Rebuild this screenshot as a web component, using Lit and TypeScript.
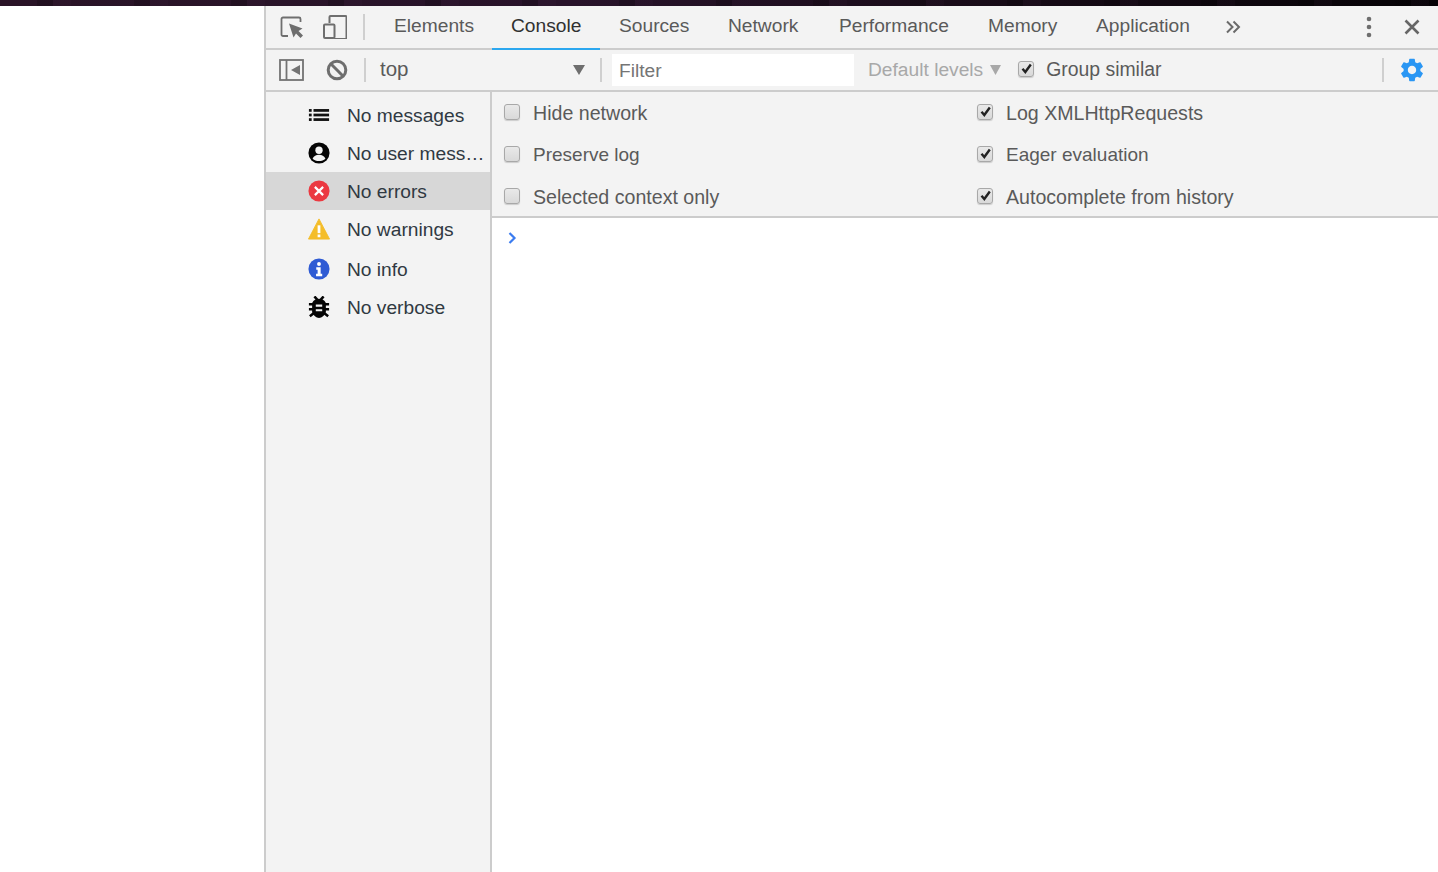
import { LitElement, html, css, svg } from "lit";
import { customElement } from "lit/decorators.js";

const ICONS: Record<string, unknown> = {
  list: svg`<rect x="1" y="5.500" width="3" height="3" fill="#111"/><rect x="1" y="10.500" width="3" height="3" fill="#111"/><rect x="1" y="15.500" width="3" height="3" fill="#111"/><rect x="6" y="5.500" width="17" height="3" fill="#111"/><rect x="6" y="10.500" width="17" height="3" fill="#111"/><rect x="6" y="15.500" width="17" height="3" fill="#111"/>`,
  user: svg`<circle cx="12" cy="12" r="11.500" fill="#050505"/><circle cx="12" cy="9" r="4" fill="#f3f3f3"/><path d="M5 18.200c1-3.200 4-4.400 7-4.400s6 1.200 7 4.400c-1.800 1.700-4.200 2.600-7 2.600s-5.200-.9-7-2.600z" fill="#f3f3f3"/>`,
  error: svg`<circle cx="12" cy="12" r="11.500" fill="#eb3941"/><path d="M7.500 7.500l9 9M16.500 7.500l-9 9" stroke="#fff" stroke-width="2.400"/>`,
  warn: svg`<path d="M12 1 23.500 23H.5z" fill="#f4bd2a" stroke="#f4bd2a" stroke-linejoin="round"/><rect x="10.500" y="8" width="3" height="8.500" fill="#fff"/><rect x="10.500" y="18" width="3" height="3" fill="#fff"/>`,
  info: svg`<circle cx="12" cy="12" r="11.500" fill="#2f5bd4"/><circle cx="12" cy="6.500" r="2.100" fill="#fff"/><path d="M9 10h4.800v7.300h1.700V20H8.800v-2.700h1.700v-4.600H9z" fill="#fff"/>`,
  bug: svg`<path d="M7 .5l3 3.500M17 .5l-3 3.500M1 9h5M18 9h5M1 14.500h5M18 14.500h5M2 22l4.500-3.500M22 22l-4.500-3.500" stroke="#050505" stroke-width="2.800" fill="none"/><path d="M4.500 7.500C6 4.500 9 3 12 3s6 1.500 7.500 4.500v10C18 21.500 15 24 12 24s-6-2.500-7.500-6.500z" fill="#050505"/><path d="M8.500 10.500h7M8.500 15.500h7" stroke="#f3f3f3" stroke-width="2.200"/>`,
};

const TABS = [
  ["Elements", 79],
  ["Console", 70],
  ["Sources", 71],
  ["Network", 73],
  ["Performance", 111],
  ["Memory", 70],
  ["Application", 97],
] as const;

const FILTERS = [
  ["list", "No messages", ""],
  ["user", "No user messages", ""],
  ["error", "No errors", "selected"],
  ["warn", "No warnings", ""],
  ["info", "No info", "gap"],
  ["bug", "No verbose", ""],
];

const OPTIONS = [
  ["Hide network", false],
  ["Log XMLHttpRequests", true],
  ["Preserve log", false],
  ["Eager evaluation", true],
  ["Selected context only", false],
  ["Autocomplete from history", true],
] as const;

@customElement("app-root")
export class AppRoot extends LitElement {
  static styles = css`
    :host {
      display: flex;
      flex-direction: column;
      height: 100vh;
      min-height: 872px;
      background: #fff;
      font-family: "Liberation Sans", Arial, sans-serif;
      font-size: 19.2px;
      color: #5a5a5a;
      overflow: hidden;
    }
    svg { display: block; flex: none; }
    .strip {
      height: 6px;
      flex: none;
      background:
        repeating-linear-gradient(90deg, rgba(0,0,0,0) 0 37px, rgba(0,0,0,.18) 37px 53px, rgba(70,40,70,.1) 53px 71px, rgba(0,0,0,0) 71px 97px),
        linear-gradient(90deg, #2a1427 0%, #28132a 40%, #170b17 70%, #060306 100%);
    }
    .page { flex: 1; display: flex; min-height: 0; }
    .blank { width: 264px; flex: none; background: #fff; }
    .devtools {
      flex: 1;
      min-width: 0;
      display: flex;
      flex-direction: column;
      border-left: 2px solid #cccccc;
      background: #fff;
    }
    .tabbar {
      height: 42px;
      flex: none;
      display: flex;
      align-items: stretch;
      background: #f3f3f3;
      border-bottom: 2px solid #cccccc;
    }
    .bar-icons { display: flex; align-items: center; flex: none; }
    .inspect { margin: 0 0 0 14px; }
    .device { margin-left: 19px; }
    .sep { width: 2px; background: #cfcfcf; flex: none; }
    .tabbar .sep { height: 26px; margin-left: 16px; }
    .tabs { display: flex; margin-left: 10px; }
    .tab {
      padding: 0 19px 5px;
      height: 44px;
      box-sizing: border-box;
      display: flex;
      align-items: center;
      white-space: nowrap;
      color: #5a5a5a;
    }
    .tab span { display: block; }
    .tab.active { color: #303030; border-bottom: 2px solid #2ba7ef; padding-bottom: 3px; }
    .more { margin-left: 13px; }
    .grow { flex: 1; }
    .dots { margin-right: 31px; }
    .close { margin-right: 17px; }
    .toolbar {
      height: 40px;
      flex: none;
      display: flex;
      align-items: center;
      background: #f3f3f3;
      border-bottom: 2px solid #cccccc;
    }
    .toggle { margin-left: 13px; }
    .block { margin-left: 22px; }
    .toolbar .sep { height: 24px; }
    .sep1 { margin-left: 16px; }
    .context {
      width: 234px;
      flex: none;
      box-sizing: border-box;
      display: flex;
      align-items: center;
      justify-content: space-between;
      padding: 0 15px 0 14px;
      color: #5a5a5a;
    }
    .context span { padding-bottom: 2px; font-size: 20.5px; }
    .filter {
      width: 242px;
      height: 32px;
      margin-left: 10px;
      background: #fff;
      box-sizing: border-box;
      padding: 2px 0 0 7px;
      display: flex;
      align-items: center;
      color: #757575;
      flex: none;
    }
    .levels {
      margin-left: 14px;
      display: flex;
      align-items: center;
      gap: 7px;
      color: #a8a8a8;
      white-space: nowrap;
      flex: none;
    }
    .group { margin-left: 17px; display: flex; align-items: center; gap: 12px; color: #5a5a5a; white-space: nowrap; font-size: 19.4px; }
    .group span:last-child { padding-bottom: 2px; }
    .sep-end { margin-right: 14px; }
    .gear { margin-right: 12px; }
    .body { flex: 1; display: flex; min-height: 0; }
    .sidebar {
      width: 224px;
      flex: none;
      background: #f3f3f3;
      border-right: 2px solid #cccccc;
      padding-top: 4px;
      color: #303942;
    }
    .row {
      height: 38px;
      display: flex;
      align-items: center;
      padding: 0 0 0 42px;
      gap: 17px;
    }
    .row.selected { background: #d7d7d7; }
    .row.gap { margin-top: 2px; }
    .label { flex: 1; min-width: 0; overflow: hidden; white-space: nowrap; text-overflow: ellipsis; padding-top: 1px; }
    .main { flex: 1; min-width: 0; display: flex; flex-direction: column; }
    .options {
      height: 126px;
      flex: none;
      box-sizing: border-box;
      display: grid;
      grid-template-columns: 473px 1fr;
      grid-auto-rows: 42px;
      padding-left: 12px;
      background: #f3f3f3;
      border-bottom: 2px solid #cccccc;
      align-items: center;
      font-size: 19.6px;
    }
    .opt { display: flex; align-items: center; gap: 13px; white-space: nowrap; }
    .opt:nth-child(3), .opt:nth-child(4) { font-size: 19px; }
    .cb {
      width: 16px;
      height: 16px;
      flex: none;
      box-sizing: border-box;
      border: 1px solid #a8a8a8;
      border-radius: 3px;
      background: linear-gradient(#e9e9e9, #d9d9d9);
      box-shadow: 0 1px 1px rgba(0,0,0,.16);
      display: flex;
      align-items: center;
      justify-content: center;
      margin-top: -3px;
    }
    .console { flex: 1; background: #fff; padding: 14px 0 0 16px; }
  `;

  private check() {
    return html`<span class="cb"><svg width="11" height="11" viewBox="0 0 11 11"><path d="M1.500 5.800 4.300 9 9.800 1.500" fill="none" stroke="#222" stroke-width="2.400"/></svg></span>`;
  }

  render() {
    return html`
      <div class="strip"></div>
      <div class="page">
        <div class="blank"></div>
        <div class="devtools">
          <div class="tabbar">
            <div class="bar-icons">
              <svg class="inspect" width="24" height="24" viewBox="0 0 24 24">
                <path d="M8 21H3a1.500 1.500 0 0 1-1.500-1.500V4A1.500 1.500 0 0 1 3 2.500h16A1.500 1.500 0 0 1 20.500 4v3" fill="none" stroke="#6e6e6e" stroke-width="1.800"/>
                <path d="M9 8.500 22.500 13.500 18.500 16 23 20.500 20.500 23 16 18.500 13.500 22.500z" fill="#6e6e6e"/>
              </svg>
              <svg class="device" width="24" height="24" viewBox="0 0 24 24">
                <path d="M6.500 8V2a1 1 0 0 1 1-1h15a1 1 0 0 1 1 1v21a1 1 0 0 1-1 1H11" fill="none" stroke="#6e6e6e" stroke-width="2"/>
                <rect x="1" y="9.500" width="10.500" height="13.500" rx="1" fill="none" stroke="#6e6e6e" stroke-width="2"/>
              </svg>
              <div class="sep"></div>
            </div>
            <div class="tabs">
              ${TABS.map(([t, w]) => html`<div class="tab ${t === "Console" ? "active" : ""}"><span style="width:${w}px">${t}</span></div>`)}
            </div>
            <div class="bar-icons more">
              <svg width="16" height="16" viewBox="0 0 16 16"><path d="M2 2.500 7.500 8 2 13.500M8.500 2.500 14 8l-5.500 5.500" fill="none" stroke="#6a6a6a" stroke-width="2"/></svg>
            </div>
            <div class="grow"></div>
            <div class="bar-icons dots">
              <svg width="6" height="22" viewBox="0 0 6 22"><circle cx="3" cy="3" r="2.300" fill="#6e6e6e"/><circle cx="3" cy="11" r="2.300" fill="#6e6e6e"/><circle cx="3" cy="19" r="2.300" fill="#6e6e6e"/></svg>
            </div>
            <div class="bar-icons close">
              <svg width="18" height="18" viewBox="0 0 18 18"><path d="M2.500 2.500l13 13M15.500 2.500l-13 13" stroke="#666" stroke-width="2.600"/></svg>
            </div>
          </div>
          <div class="toolbar">
            <svg class="toggle" width="25" height="22" viewBox="0 0 25 22">
              <rect x="1" y="1" width="23" height="20" fill="none" stroke="#737373" stroke-width="1.800"/>
              <path d="M7.500 1v20" stroke="#737373" stroke-width="1.800"/>
              <path d="M21 6v10l-9-5z" fill="#737373"/>
            </svg>
            <svg class="block" width="22" height="22" viewBox="0 0 22 22">
              <circle cx="11" cy="11" r="8.800" fill="none" stroke="#6e6e6e" stroke-width="3"/>
              <path d="M4.800 4.800l12.400 12.400" stroke="#6e6e6e" stroke-width="3"/>
            </svg>
            <div class="sep sep1"></div>
            <div class="context">
              <span>top</span>
              <svg width="12" height="10" viewBox="0 0 12 10"><path d="M0 0h12L6 10z" fill="#6e6e6e"/></svg>
            </div>
            <div class="sep"></div>
            <div class="filter">Filter</div>
            <div class="levels">
              <span>Default levels</span>
              <svg width="11" height="10" viewBox="0 0 11 10"><path d="M0 0h11L5.500 10z" fill="#a8a8a8"/></svg>
            </div>
            <div class="group">${this.check()}<span>Group similar</span></div>
            <div class="grow"></div>
            <div class="sep sep-end"></div>
            <svg class="gear" width="28" height="28" viewBox="0 0 24 24">
              <path fill="#2a96f3" d="M19.140 12.940c.04-.3.06-.61.06-.94 0-.32-.02-.64-.07-.94l2.030-1.580c.18-.14.23-.41.12-.61l-1.920-3.320c-.12-.22-.37-.29-.59-.22l-2.390.96c-.5-.38-1.030-.7-1.620-.94l-.36-2.540c-.04-.24-.24-.41-.48-.41h-3.840c-.24 0-.43.17-.47.41l-.36 2.540c-.59.24-1.130.57-1.620.94l-2.390-.96c-.22-.08-.47 0-.59.22L2.740 8.870c-.12.21-.08.47.12.61l2.030 1.580c-.05.3-.09.63-.09.94s.02.64.07.94l-2.030 1.580c-.18.14-.23.41-.12.61l1.920 3.320c.12.22.37.29.59.22l2.390-.96c.5.38 1.030.7 1.620.94l.36 2.540c.05.24.24.41.48.41h3.840c.24 0 .44-.17.47-.41l.36-2.540c.59-.24 1.130-.56 1.620-.94l2.390.96c.22.08.47 0 .59-.22l1.920-3.320c.12-.22.07-.47-.12-.61l-2.010-1.580zM12 15.600c-1.980 0-3.600-1.620-3.600-3.600s1.620-3.600 3.600-3.600 3.600 1.620 3.600 3.600-1.620 3.600-3.600 3.600z"/>
            </svg>
          </div>
          <div class="body">
            <div class="sidebar">
              ${FILTERS.map(([icon, label, cls]) => html`
                <div class="row ${cls}">
                  <svg width="22" height="22" viewBox="0 0 24 24">${ICONS[icon]}</svg>
                  <span class="label">${label}</span>
                </div>`)}
            </div>
            <div class="main">
              <div class="options">
                ${OPTIONS.map(([label, on]) => html`
                  <label class="opt">
                    ${on ? this.check() : html`<span class="cb"></span>`}
                    <span>${label}</span>
                  </label>`)}
              </div>
              <div class="console">
                <svg width="9" height="12" viewBox="0 0 9 12"><path d="M1.500 1 6.500 6 1.500 11" fill="none" stroke="#3b7cf0" stroke-width="2.200"/></svg>
              </div>
            </div>
          </div>
        </div>
      </div>
    `;
  }
}
